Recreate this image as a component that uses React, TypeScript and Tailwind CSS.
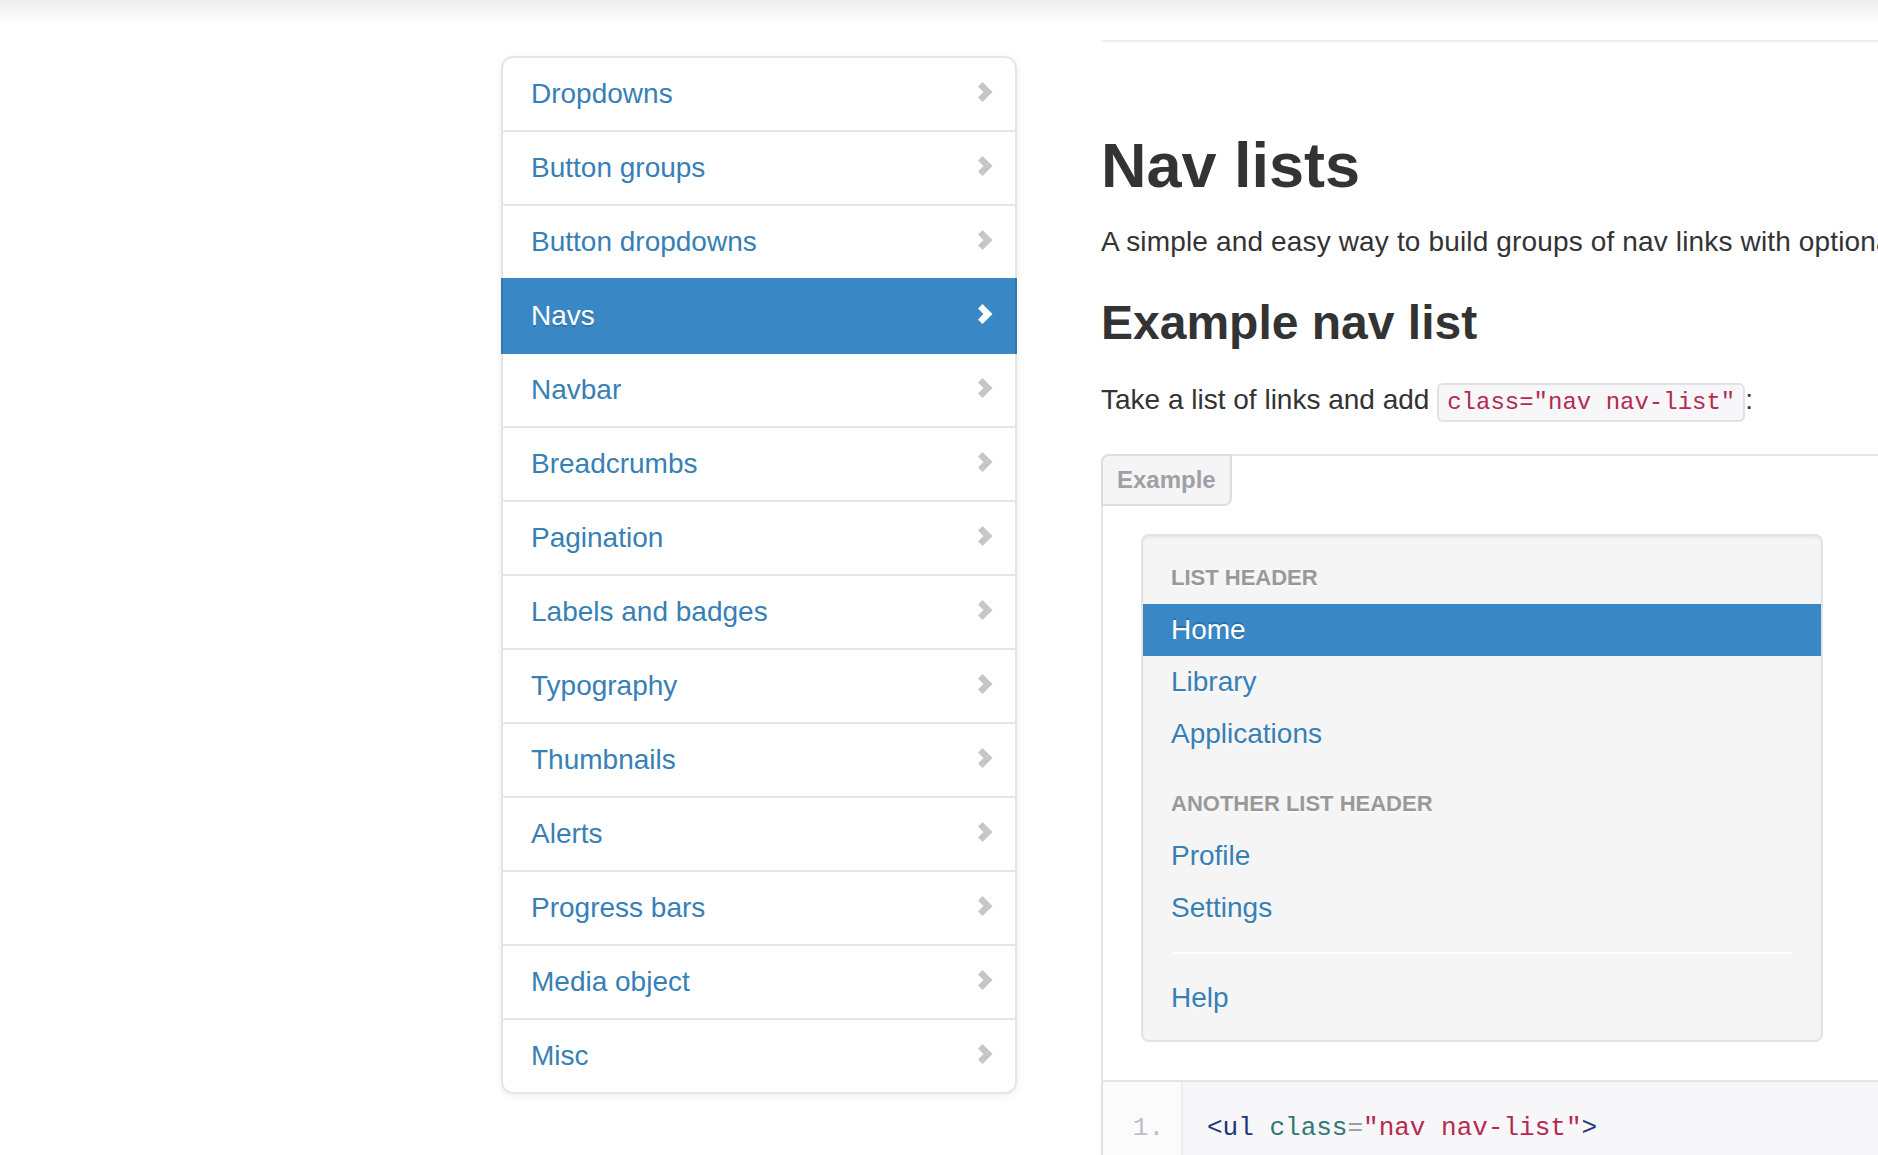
import React from 'react';

const sections = [
  'Dropdowns',
  'Button groups',
  'Button dropdowns',
  'Navs',
  'Navbar',
  'Breadcrumbs',
  'Pagination',
  'Labels and badges',
  'Typography',
  'Thumbnails',
  'Alerts',
  'Progress bars',
  'Media object',
  'Misc',
];

// thick glyph-style chevron used on the right of each sidenav row
function Chevron({ white }: { white?: boolean }) {
  return (
    <svg
      viewBox="0 0 28 28"
      className={white ? 'float-right -mr-[12px] mt-[4px] h-[28px] w-[28px] text-white' : 'float-right -mr-[12px] mt-[4px] h-[28px] w-[28px] text-[#c6c6c6]'}
      fill="currentColor"
    >
      <polygon points="7,8.5 11.5,4 21.5,14 11.5,24 7,19.5 12.5,14" />
    </svg>
  );
}

function SideNav() {
  return (
    <ul className="mt-[56px] w-[516px] rounded-[12px] bg-white shadow-[0_2px_8px_rgba(0,0,0,0.065)]">
      {sections.map((name, i) => {
        const active = name === 'Navs';
        const first = i === 0;
        const last = i === sections.length - 1;
        return (
          <li key={name}>
            <a
              href="#"
              className={
                (active
                  ? 'relative z-[2] -mb-[2px] block bg-[#3987c4] px-[30px] py-[18px] text-white shadow-[inset_2px_0_0_rgba(0,0,0,0.1),inset_-2px_0_0_rgba(0,0,0,0.1)] [text-shadow:0_2px_0_rgba(0,0,0,0.15)]'
                  : '-mb-[2px] block border-2 border-[#e5e5e5] px-[28px] py-[16px] text-[#3780b6]') +
                (first ? ' rounded-t-[12px]' : '') +
                (last ? ' rounded-b-[12px]' : '')
              }
            >
              <Chevron white={active} />
              <span className="text-[28px] leading-[40px]">{name}</span>
            </a>
          </li>
        );
      })}
    </ul>
  );
}

function NavHeader({ children, first }: { children: React.ReactNode; first?: boolean }) {
  return (
    <li
      className={
        (first ? '' : 'mt-[18px] ') +
        'px-[28px] py-[6px] text-[22px] font-bold uppercase leading-[40px] text-[#999999] [text-shadow:0_2px_0_rgba(255,255,255,0.5)]'
      }
    >
      {children}
    </li>
  );
}

function NavItem({ children, active }: { children: React.ReactNode; active?: boolean }) {
  return (
    <li>
      <a
        href="#"
        className={
          active
            ? 'block bg-[#3987c4] px-[28px] py-[6px] text-[28px] leading-[40px] text-white [text-shadow:0_-2px_0_rgba(0,0,0,0.2)]'
            : 'block px-[28px] py-[6px] text-[28px] leading-[40px] text-[#3780b6] [text-shadow:0_2px_0_rgba(255,255,255,0.5)]'
        }
      >
        {children}
      </a>
    </li>
  );
}

function NavListExample() {
  return (
    <div className="relative mt-[31px] rounded-t-[8px] border-2 border-[#e5e5e5] bg-white px-[38px] pb-[38px] pt-[78px]">
      <div className="absolute -left-[2px] -top-[2px] rounded-br-[8px] rounded-tl-[8px] border-2 border-[#dddddd] bg-[#f5f5f5] px-[14px] py-[6px] text-[24px] font-bold leading-[36px] text-[#9da0a4]">
        Example
      </div>
      <div className="w-[682px] rounded-[8px] border-2 border-[#e3e3e3] bg-[#f5f5f5] py-[16px] shadow-[inset_0_2px_2px_rgba(0,0,0,0.05)]">
        <ul>
          <NavHeader first>List header</NavHeader>
          <NavItem active>Home</NavItem>
          <NavItem>Library</NavItem>
          <NavItem>Applications</NavItem>
          <NavHeader>Another list header</NavHeader>
          <NavItem>Profile</NavItem>
          <NavItem>Settings</NavItem>
          <li className="mx-[30px] my-[18px] h-[2px] border-b-2 border-white bg-[#e5e5e5]" />
          <NavItem>Help</NavItem>
        </ul>
      </div>
    </div>
  );
}

function CodeSample() {
  return (
    <div className="flex h-[120px] border-x-2 border-b-2 border-[#e1e1e8] bg-[#f7f7f9] font-['Liberation_Mono',monospace] text-[26px] leading-[40px]">
      <div className="w-[80px] shrink-0 border-r-2 border-[#ececf0] bg-[#fbfbfc] pr-[17px] pt-[26px] text-right text-[#bebec5]">
        1.
      </div>
      <pre className="pl-[24px] pt-[26px] font-['Liberation_Mono',monospace]">
        <span className="text-[#1e347b]">{'<ul'}</span> <span className="text-[#2f7a73]">class</span>
        <span className="text-[#93a1a1]">=</span>
        <span className="text-[#b52a4e]">"nav nav-list"</span>
        <span className="text-[#1e347b]">{'>'}</span>
      </pre>
    </div>
  );
}

export default function App() {
  return (
    <div className="relative h-[1155px] w-full overflow-hidden bg-white font-['Liberation_Sans',Arial,sans-serif] text-[#333333]">
      <div className="flex gap-[60px] pl-[501px]">
        <div className="w-[540px] shrink-0">
          <SideNav />
        </div>

        <div className="w-[1740px] shrink-0">
          <div className="mt-[40px] h-[2px] bg-[#eeeeee]" />
          <h1 className="mt-[92px] text-[63px] font-bold leading-[62px]">Nav lists</h1>
          <p className="mt-[26px] text-[28px] leading-[40px] tracking-[0.15px]">
            A simple and easy way to build groups of nav links with optional headers. They're best used in sidebars like the Finder in OS X.
          </p>
          <h2 className="mt-[37px] text-[48px] font-bold leading-[48px]">Example nav list</h2>
          <p className="mt-[33px] text-[28px] leading-[40px]">
            Take a list of links and add{' '}
            <code className="rounded-[6px] border-2 border-[#e1e1e8] bg-[#f7f7f9] px-[8px] py-[4px] font-['Liberation_Mono',monospace] text-[24px] text-[#b52a4e]">
              class="nav nav-list"
            </code>
            :
          </p>
          <NavListExample />
          <CodeSample />
        </div>
      </div>

      <div className="pointer-events-none absolute inset-x-0 top-0 h-[24px] bg-linear-to-b from-[#eeeeee] to-transparent" />
    </div>
  );
}
